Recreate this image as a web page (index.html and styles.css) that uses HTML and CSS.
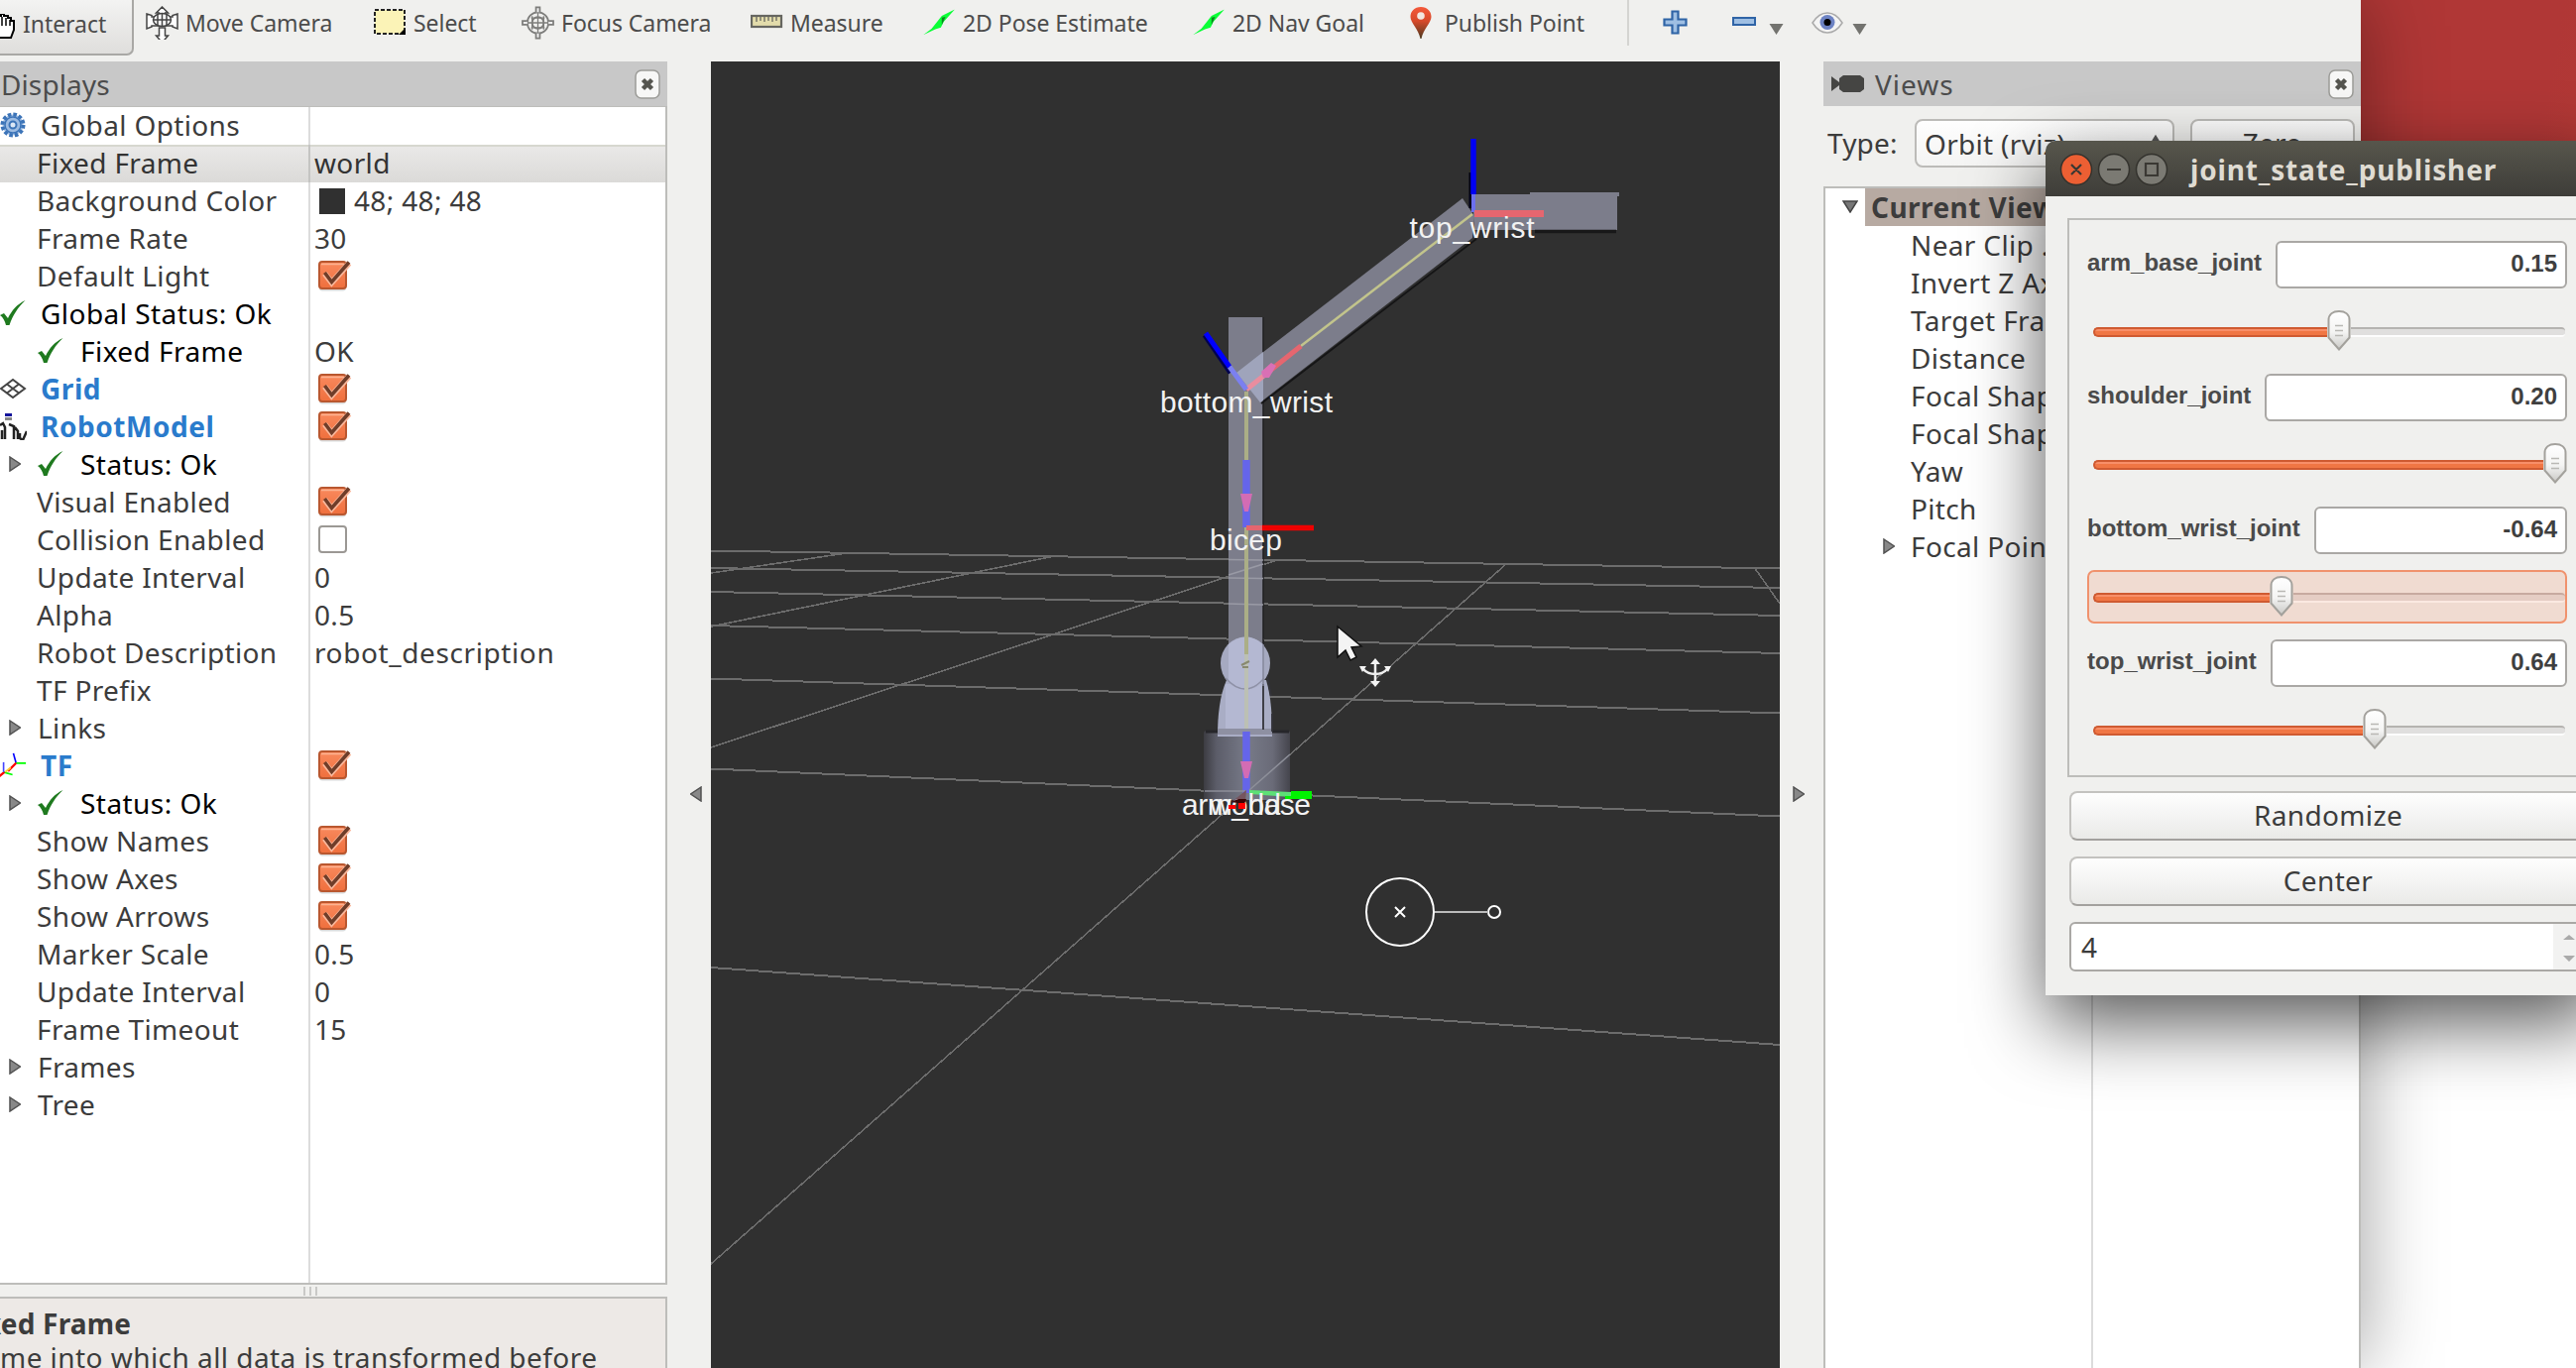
FILE: index.html
```html
<!DOCTYPE html>
<html lang="en">
<head>
<meta charset="utf-8">
<title>RViz</title>
<link rel="stylesheet" href="styles.css">
</head>
<body>
<svg class="defs" width="0" height="0">
  <defs>
    <linearGradient id="g-check" x1="0" y1="0" x2="0" y2="1"><stop offset="0" stop-color="#f98a5e"/><stop offset="1" stop-color="#ef6f3d"/></linearGradient>
    <linearGradient id="g-handle" x1="0" y1="0" x2="0" y2="1"><stop offset="0" stop-color="#fff"/><stop offset=".55" stop-color="#f4f4f3"/><stop offset="1" stop-color="#c9c8c5"/></linearGradient>
    <linearGradient id="g-pin" x1="0" y1="0" x2="0" y2="1"><stop offset="0" stop-color="#f4593a"/><stop offset=".45" stop-color="#d6492a"/><stop offset="1" stop-color="#4a3a20"/></linearGradient>
    <linearGradient id="g-base" x1="0" y1="0" x2="1" y2="0"><stop offset="0" stop-color="#3c3c42"/><stop offset=".15" stop-color="#5c5d69"/><stop offset=".5" stop-color="#777a88"/><stop offset=".8" stop-color="#6a6b78"/><stop offset="1" stop-color="#45454d"/></linearGradient>
    <symbol id="check" viewBox="0 0 34 32"><rect x="1" y="1.5" width="27" height="27" rx="3" fill="#000" opacity=".15" transform="translate(0 2)"/><rect x="1" y="1" width="27" height="27" rx="3" fill="url(#g-check)" stroke="#b9572f" stroke-width="2"/><path d="M3 3.5h23" stroke="#fcb392" stroke-width="1.5"/><path d="M6.500 13l7 9L31 2.500" fill="none" stroke="#f9b79b" stroke-width="6"/><path d="M6.500 12l7 9.500L31 1.500" fill="none" stroke="#6f3d29" stroke-width="3.600"/></symbol>
    <symbol id="tick" viewBox="0 0 26 26"><path d="M0 15l4-2 4 5C12 10 17 4 25.500 0 18 7 13 15 9.500 25H6C5 21 3 17 0 15z" fill="#1f7a1f"/></symbol>
    <symbol id="tri" viewBox="0 0 12 16"><path d="M1 1l10.500 7L1 15z" fill="#888" stroke="#505050" stroke-width="1.500"/></symbol>
    <symbol id="closebox" viewBox="0 0 26 30"><rect x="1" y="1" width="24" height="28" rx="6" fill="#f7f7f6" stroke="#9c9c98" stroke-width="1.500"/><path d="M8.500 10.500l9 9m0-9l-9 9" stroke="#55554f" stroke-width="4.500"/></symbol>
    <symbol id="handle" viewBox="0 0 24 41"><path d="M1.500 10C1.500 4 6 1 12 1s10.500 3 10.500 9v17.500L12 39.500 1.500 27.500z" fill="url(#g-handle)" stroke="#a3a19c" stroke-width="2"/><path d="M8 15.500h8M8 20.500h8M8 25.500h8" stroke="#b9b8b4" stroke-width="1.500"/></symbol>
    <symbol id="arrow" viewBox="0 0 34 28"><path d="M34 0L20 7l-4 5-7 9-9 6.500 13-6 6-2 3-6z" fill="#0bff37"/><path d="M20 9l4-1-4 9z" fill="#0a8a1f"/></symbol>
    <symbol id="down" viewBox="0 0 14 11"><path d="M0 0h14L7 11z" fill="#73736f"/></symbol>
  </defs>
</svg>

<div class="desktop">
  <div class="paper"></div>
  <main class="rviz">
    <div class="toolbar">
      <button class="tool active"><svg class="hand" viewBox="0 0 16 26"><path d="M-3 2v22h14l3-8V7h-3V4H8V2H4V0H1v2z" fill="#fff" stroke="#000" stroke-width="2"/><path d="M2 3v9M6 4v8M10 6v6" stroke="#000" stroke-width="1.500"/></svg><span>Interact</span></button>
      <button class="tool"><svg class="ic" viewBox="0 0 33 34"><g fill="#fff" stroke="#444" stroke-width="1.500"><path d="M16.500 1l6 6h-3v4h-6V7h-3zM16.500 37l6-7h-3v-8h-6v8h-3zM1 8l5 1.500V11h21V9.500L32 8v15l-5-2v-1H6v1l-5 2z"/><ellipse cx="16.500" cy="14" rx="9" ry="6.500"/><path d="M12 8v12M16.500 7v14M21 8v12M8 14h17" fill="none"/></g></svg><span>Move Camera</span></button>
      <button class="tool"><svg class="ic" viewBox="0 0 33 34"><rect x="1" y="4" width="30" height="24" fill="#fbf3b7" stroke="#222" stroke-width="2" stroke-dasharray="4 2"/><path d="M32 22v7h-7z"/></svg><span>Select</span></button>
      <button class="tool"><svg class="ic" viewBox="0 0 34 34"><g fill="none" stroke="#7d7d7b" stroke-width="1.800"><circle cx="17" cy="17" r="11"/><circle cx="17" cy="17" r="6"/><path d="M17 5v24M5 17h24M11 10v14M23 10v14M10 12h14M10 22h14" stroke-width="1.300"/><path d="M15 6V1h4v5M15 28v5h4v-5M6 15H1v4h5M28 15h5v4h-5" fill="#eee"/></g></svg><span>Focus Camera</span></button>
      <button class="tool"><svg class="ic" viewBox="0 0 33 34"><rect x="1" y="10" width="30" height="11" fill="#e3dcab" stroke="#666660" stroke-width="2.200"/><path d="M6 11v5M10 11v4M14 11v5M18 11v4M22 11v5M26 11v4" stroke="#77756a" stroke-width="1.500"/></svg><span>Measure</span></button>
      <button class="tool"><svg class="ic" viewBox="0 -3 34 34"><use href="#arrow" width="33" height="27"/></svg><span>2D Pose Estimate</span></button>
      <button class="tool"><svg class="ic" viewBox="0 -3 34 34"><use href="#arrow" width="33" height="27"/></svg><span>2D Nav Goal</span></button>
      <button class="tool pin"><svg class="ic" viewBox="0 0 22 34"><path d="M11 1C4.500 1 .5 5.500.5 11c0 6 8 12 10 22h1c2-10 10-16 10-22C21.500 5.500 17.500 1 11 1z" fill="url(#g-pin)"/><circle cx="11" cy="10" r="3.800" fill="#f3e6e0"/></svg><span>Publish Point</span></button>
      <i class="sep"></i>
      <svg class="plus" viewBox="0 0 25 25"><path d="M9.500 1.500h6v8h8v6h-8v8h-6v-8h-8v-6h8z" fill="#9fbfe3" stroke="#2f64a6" stroke-width="2.200"/></svg>
      <div class="pair"><svg class="minus" viewBox="0 0 25 10"><rect x="1" y="1" width="22" height="7" fill="#9fbfe3" stroke="#2f64a6" stroke-width="2"/></svg><svg class="down"><use href="#down"/></svg></div>
      <div class="pair eyes"><svg class="eye" viewBox="0 0 32 22"><path d="M1 11C6 3 11 1 16 1s10 2 15 10c-5 8-10 10-15 10S6 19 1 11z" fill="#f4f4f4" stroke="#aaa" stroke-width="1.500"/><circle cx="16" cy="10.500" r="7.500" fill="#6d83c4"/><circle cx="16" cy="10.500" r="3.500"/></svg><svg class="down"><use href="#down"/></svg></div>
    </div>

    <div class="work">
      <section class="displays">
        <header class="dock"><span>Displays</span><svg class="x"><use href="#closebox"/></svg></header>
        <div class="tree">
          <div class="row root"><svg class="gear" viewBox="0 0 27 27"><circle cx="13" cy="13" r="10.500" fill="#9dbce2" stroke="#3c74b8" stroke-width="4" stroke-dasharray="3.500 2"/><circle cx="13" cy="13" r="8" fill="none" stroke="#3c74b8" stroke-width="1.500"/><circle cx="13" cy="13" r="3.500" fill="#dce8f6" stroke="#3c74b8" stroke-width="2"/></svg><b class="name">Global Options</b><span></span></div>
          <div class="row sel"><b class="name">Fixed Frame</b><span>world</span></div>
          <div class="row"><b class="name">Background Color</b><span><i class="swatch"></i>48; 48; 48</span></div>
          <div class="row"><b class="name">Frame Rate</b><span>30</span></div>
          <div class="row"><b class="name">Default Light</b><span><svg class="cb"><use href="#check"/></svg></span></div>
          <div class="row root ok"><svg class="tick"><use href="#tick"/></svg><b class="name">Global Status: Ok</b><span></span></div>
          <div class="row status ok"><svg class="tick"><use href="#tick"/></svg><b class="name">Fixed Frame</b><span>OK</span></div>
          <div class="row root disp"><svg class="gear" viewBox="0 0 27 27"><path d="M1 13L13 4l12 9-12 9zM7 8.500l12 9M19 8.500l-12 9" fill="none" stroke="#444" stroke-width="2"/></svg><b class="name">Grid</b><span><svg class="cb"><use href="#check"/></svg></span></div>
          <div class="row root disp"><svg class="gear" viewBox="0 0 27 27"><path d="M5 0h7v3H5z" fill="#14149a"/><path d="M5 4h7v3H5z" fill="#888"/><path d="M0 12l3-2 2 4v12M9 11l5 2v13M15 14l3 4v8M20 20v5l3 2 4-9M2 17v9" fill="none" stroke="#222" stroke-width="2.500"/></svg><b class="name">RobotModel</b><span><svg class="cb"><use href="#check"/></svg></span></div>
          <div class="row status ok"><svg class="tri"><use href="#tri"/></svg><svg class="tick"><use href="#tick"/></svg><b class="name">Status: Ok</b><span></span></div>
          <div class="row"><b class="name">Visual Enabled</b><span><svg class="cb"><use href="#check"/></svg></span></div>
          <div class="row"><b class="name">Collision Enabled</b><span><i class="empty"></i></span></div>
          <div class="row"><b class="name">Update Interval</b><span>0</span></div>
          <div class="row"><b class="name">Alpha</b><span>0.5</span></div>
          <div class="row"><b class="name">Robot Description</b><span class="wide">robot_description</span></div>
          <div class="row"><b class="name">TF Prefix</b><span></span></div>
          <div class="row"><svg class="tri"><use href="#tri"/></svg><b class="name">Links</b><span></span></div>
          <div class="row root disp"><svg class="gear tf" viewBox="0 0 30 28"><path d="M15 0l3 11" stroke="#00f" stroke-width="1.800"/><path d="M18 11h11M4 21l10 3" stroke="#0f0" stroke-width="2"/><path d="M18 11L9 20M5 21l-6 5" stroke="#f00" stroke-width="2.500"/><path d="M12 16l-6 5" stroke="#fc3" stroke-width="2"/><path d="M4 10v11" stroke="#44f" stroke-width="1.800"/></svg><b class="name">TF</b><span><svg class="cb"><use href="#check"/></svg></span></div>
          <div class="row status ok"><svg class="tri"><use href="#tri"/></svg><svg class="tick"><use href="#tick"/></svg><b class="name">Status: Ok</b><span></span></div>
          <div class="row"><b class="name">Show Names</b><span><svg class="cb"><use href="#check"/></svg></span></div>
          <div class="row"><b class="name">Show Axes</b><span><svg class="cb"><use href="#check"/></svg></span></div>
          <div class="row"><b class="name">Show Arrows</b><span><svg class="cb"><use href="#check"/></svg></span></div>
          <div class="row"><b class="name">Marker Scale</b><span>0.5</span></div>
          <div class="row"><b class="name">Update Interval</b><span>0</span></div>
          <div class="row"><b class="name">Frame Timeout</b><span>15</span></div>
          <div class="row"><svg class="tri"><use href="#tri"/></svg><b class="name">Frames</b><span></span></div>
          <div class="row"><svg class="tri"><use href="#tri"/></svg><b class="name">Tree</b><span></span></div>
          <div class="row fill"><b class="name"></b><span></span></div>
        </div>
        <div class="grip"><i></i><i></i><i></i></div>
        <div class="help"><strong>xed Frame</strong><p>me into which all data is transformed before</p></div>
      </section>

      <div class="gutter"><svg class="collapse flip"><use href="#tri"/></svg></div>

      <svg class="scene" viewBox="717 62 1078 1318" width="1078" height="1318">
        <g stroke="#6c6c6c" stroke-width="2" fill="none" shape-rendering="crispEdges">
          <path d="M717 555.500L1795 573.500M717 573L1795 593M717 597L1795 621M717 631L1795 659M717 684.500L1795 719.500M717 775.500L1795 823.500M717 976L1795 1054"/>
          <path d="M717 578L854 558M717 632L1063 561M717 754L1287 565.500M717 1275L1257 800L1519 569M1769 572L1795 609" stroke-width="1.600"/>
        </g>
        <rect x="1214" y="737" width="87" height="70" rx="3" fill="url(#g-base)"/>
        <path d="M1216 738h84" stroke="#26262a" stroke-width="3"/>
        <path d="M1239 320h35v370h-35z" fill="#7c7d8b"/>
        <path d="M1274 320v370" stroke="#1f1f20" stroke-width="1.500"/>
        <path d="M1239 564.500l35 .5M1239 583l35 .5M1239 609l35 1M1239 580l35-11" stroke="#999aa5" stroke-width="1.500"/>
        <path d="M1237 686C1230 702 1228 722 1228 743h55c0-22-1-40-6-57z" fill="#a9adc5"/>
        <path d="M1236 690v50h38v-50z" fill="#b4b8d2"/>
        <path d="M1228 738h55" stroke="#8e90a2" stroke-width="6"/>
        <path d="M1274 690v46M1283 720v18M1278 682l4 20" stroke="#333339" stroke-width="1.800"/>
        <ellipse cx="1256" cy="669" rx="25" ry="26.500" fill="#a6aac1"/>
        <path d="M1239 650q17-15 35 0v38q-17 14-35 0z" fill="#b4b8d2"/>
        <path d="M1236 684q20 22 39 0" fill="none" stroke="#8e91a6" stroke-width="1.500"/>
        <path d="M1274 650v42" stroke="#85879a" stroke-width="1.500"/>
        <path d="M1475 200L1247 376l24 30L1485 240l2-22z" fill="#7c7d8b"/>
        <path d="M1272 407L1489 241" stroke="#151516" stroke-width="1.800"/>
        <path d="M1247 376l27-21v49l-3 2z" fill="#9fa4bb"/>
        <path d="M1483 174v36" stroke="#000018" stroke-width="3"/>
        <path d="M1486 140v56" stroke="#0000f4" stroke-width="5.500"/>
        <path d="M1485 196h58v-2h90v4h-2v34h-144z" fill="#7c7d8b"/>
        <path d="M1548 233.500h82" stroke="#181819" stroke-width="3.500"/>
        <path d="M1486 196v18" stroke="#6c70ee" stroke-width="4"/>
        <path d="M1487 215.500h70" stroke="#e5666f" stroke-width="7"/>
        <path d="M1485 216L1312 349" stroke="#c2c48c" stroke-width="2.500"/>
        <path d="M1312 349l-30 24" stroke="#e5666f" stroke-width="5"/>
        <path d="M1282 373l-25 20" stroke="#e98d9f" stroke-width="5"/>
        <path d="M1287 369l-5-3-10 9 2 6 6 0z" fill="#d970b5"/>
        <path d="M1215 338l26 38" stroke="#000050" stroke-width="5"/>
        <path d="M1216 336l24 34" stroke="#00f" stroke-width="5"/>
        <path d="M1240 370l17 23" stroke="#7b80f0" stroke-width="5"/>
        <path d="M1257 395v338" stroke="#abae86" stroke-width="4"/>
        <path d="M1257 660v75" stroke="#bcc0b4" stroke-width="4"/>
        <path d="M1252 671l8-4M1253 673h6" stroke="#88896f" stroke-width="2"/>
        <path d="M1257 464v68M1257 738v62" stroke="#6565ea" stroke-width="7.500"/>
        <path d="M1251 498h12l-4 18h-4zM1251 768h12l-4 17h-4z" fill="#d36cb4"/>
        <path d="M1257 532.500h17" stroke="#e5666f" stroke-width="5"/>
        <path d="M1273 532.500h52" stroke="#ee0000" stroke-width="5.500"/>
        <path d="M1215 798h42M1260 797l41-36" stroke="#8d8f99" stroke-width="1.500"/>
        <path d="M1260 797l42 2v5l-42-3z" fill="#5de076"/>
        <path d="M1302 798h21v8h-27v-3h6z" fill="#00f400"/>
        <path d="M1257 797l-15 12h14z" fill="#75555f"/>
        <g class="label">
          <text x="1421.500" y="240" textLength="126">top_wrist</text>
          <text x="1170" y="416" textLength="174">bottom_wrist</text>
          <text x="1220" y="555" textLength="73">bicep</text>
          <text x="1192" y="822" textLength="130">arm_base</text>
          <text x="1220" y="822" textLength="72">world</text>
        </g>
        <path d="M1241 809l8-3h8l-2 5z" fill="#3a0505"/>
        <path d="M1239 812h7v4h-7zM1249 810h7v6h-7z" fill="#f00"/>
        <path d="M1349 632v31l8-7 5 10 6-3-5-10 10-1z" fill="#f4f4f4" stroke="#111" stroke-width="1.500"/>
        <path d="M1387 668v21M1374 674q5 6 13 6t13-6" fill="none" stroke="#eee" stroke-width="2.500"/>
        <path d="M1387 664l5 6h-10zM1387 693l5-6h-10zM1371 672l7 0-4 6zM1403 672l-7 0 4 6z" fill="#f4f4f4"/>
        <g fill="none" stroke="#fff" stroke-width="2"><circle cx="1412" cy="920" r="34"/><path d="M1407 915l10 10m0-10l-10 10"/><circle cx="1507" cy="920" r="6"/><path d="M1447 920h54" stroke="#bbb"/></g>
      </svg>

      <div class="gutter right"><svg class="collapse"><use href="#tri"/></svg></div>

      <section class="views">
        <header class="dock"><svg class="cam" viewBox="0 0 33 18"><path d="M0 1l8 6V3l4-3h17l4 3v11l-4 3H12l-4-3v-4l-8 6z" fill="#454543"/></svg><span>Views</span><svg class="x"><use href="#closebox"/></svg></header>
        <div class="type"><label>Type:</label><div class="combo"><span>Orbit (rviz)</span><svg viewBox="0 0 12 22"><path d="M6 0l5 8H1zM6 22l5-8H1z" fill="#555"/></svg></div><div class="zero">Zero</div></div>
        <div class="vtree">
          <div class="vhead"><svg viewBox="0 0 16 13"><path d="M1 1h14L8 12z" fill="#777" stroke="#444" stroke-width="1.500"/></svg><strong>Current View</strong></div>
          <div class="vrow">Near Clip ...</div>
          <div class="vrow">Invert Z Axis</div>
          <div class="vrow">Target Frame</div>
          <div class="vrow">Distance</div>
          <div class="vrow">Focal Shape</div>
          <div class="vrow">Focal Shape</div>
          <div class="vrow">Yaw</div>
          <div class="vrow">Pitch</div>
          <div class="vrow exp"><svg class="tri"><use href="#tri"/></svg>Focal Point</div>
        </div>
      </section>
    </div>
  </main>

  <aside class="joints">
    <header class="title"><svg viewBox="0 0 110 34" width="110" height="34"><g stroke="#33322d" stroke-width="1.500"><circle cx="17" cy="17" r="15.500" fill="#ec5f33"/><circle cx="55" cy="17" r="15.500" fill="#7b7a73"/><circle cx="93" cy="17" r="15.500" fill="#7b7a73"/></g><path d="M12 12l10 10m0-10L12 22M48 17h14M87 11h12v12H87z" fill="none" stroke="#3a3833" stroke-width="2.200"/></svg><span>joint_state_publisher</span></header>
    <div class="frame">
      <div class="joint"><label>arm_base_joint</label><output>0.15</output></div>
      <div class="slider"><i class="fillbar s1"></i><svg class="handle"><use href="#handle"/></svg><i class="rest"></i></div>
      <div class="joint"><label>shoulder_joint</label><output>0.20</output></div>
      <div class="slider"><i class="fillbar s2"></i><svg class="handle"><use href="#handle"/></svg><i class="rest"></i></div>
      <div class="joint"><label>bottom_wrist_joint</label><output>-0.64</output></div>
      <div class="slider focus"><i class="fillbar s3"></i><svg class="handle"><use href="#handle"/></svg><i class="rest"></i></div>
      <div class="joint"><label>top_wrist_joint</label><output>0.64</output></div>
      <div class="slider"><i class="fillbar s4"></i><svg class="handle"><use href="#handle"/></svg><i class="rest"></i></div>
    </div>
    <div class="btn">Randomize</div>
    <div class="btn">Center</div>
    <div class="spin"><span>4</span><svg viewBox="0 0 32 46" width="32" height="46"><path d="M10 16l6-5 6 5zM10 32h12l-6 6z" fill="#aaa"/></svg></div>
  </aside>
</div>
</body>
</html>
```
FILE: styles.css
```css
* { box-sizing: border-box; }
body {
  margin: 0;
  overflow: hidden;
  font-family: "Noto Sans", sans-serif;
  font-size: 28px;
  letter-spacing: .15px;
  color: #3c3c3c;
}
.defs { position: absolute; }
svg { display: block; flex: none; }
i { display: block; }

.desktop {
  position: relative;
  width: 2598px;
  height: 1380px;
  overflow: hidden;
  background: linear-gradient(100deg, #b03736 91%, #b73c32 97%);
}
.paper { position: absolute; left: 2381px; top: 600px; width: 217px; height: 780px; background: #fff; }

.rviz {
  position: relative;
  width: 2381px;
  height: 1380px;
  display: flex;
  flex-direction: column;
  background: #f0f0ee;
  box-shadow: 0 0 75px rgba(0, 0, 0, .38);
}

/* toolbar */
.toolbar {
  height: 62px;
  display: grid;
  grid-template-columns: 147px 230px 149px 231px 174px 272px 219px 219px 36px 70px 80px 100px;
  align-items: start;
}
.tool {
  display: flex;
  align-items: center;
  height: 46px;
  padding: 0;
  border: 0;
  background: none;
  font: 23px/46px "Noto Sans", sans-serif;
  letter-spacing: -.05px;
  color: #4c4c4c;
  white-space: nowrap;
}
.tool .ic { width: 33px; height: 34px; margin-right: 7px; }
.tool.pin .ic { width: 22px; margin-right: 13px; }
.tool.active {
  width: 135px;
  height: 56px;
  padding-bottom: 7px;
  border-right: 2px solid #a9a8a5;
  border-bottom: 2px solid #a9a8a5;
  border-radius: 0 0 7px 0;
  background: linear-gradient(#f3f3f2, #dfdedc);
}
.hand { width: 16px; height: 26px; margin: 6px 7px 0 0; }
.sep { width: 2px; height: 46px; background: #d4d4d1; }
.plus { width: 25px; height: 25px; margin-top: 10px; }
.pair { display: flex; padding-top: 17px; gap: 12px; }
.minus { width: 25px; height: 10px; }
.down { width: 15px; height: 11px; margin-top: 7px; }
.eyes { padding-top: 12px; gap: 9px; }
.eyes .down { margin-top: 12px; }
.eye { width: 32px; height: 22px; }

/* docks */
.work { flex: 1; display: flex; }
.dock {
  height: 45px;
  display: flex;
  align-items: center;
  background: #c8c8c8;
  color: #4c4c4c;
}
.dock .x { width: 26px; height: 30px; margin-left: auto; }
.displays { width: 673px; height: 1318px; display: flex; flex-direction: column; }
.displays .dock { padding: 0 7px 0 1px; letter-spacing: .1px; }

.tree {
  height: 1189px;
  display: flex;
  flex-direction: column;
  border: solid #bdbdba;
  border-width: 1px 2px 2px 0;
  background: #fff;
}
.row {
  height: 38px;
  flex: none;
  display: flex;
  align-items: center;
  line-height: 37px;
  white-space: nowrap;
  padding-left: 37px;
  letter-spacing: .35px;
}
.row .name {
  flex: 1;
  height: 38px;
  font-weight: 400;
}
.row > span {
  width: 360px;
  height: 38px;
  display: flex;
  align-items: center;
  padding: 0 0 1px 4px;
  border-left: 2px solid #dcdcdc;
}
.row > .wide { letter-spacing: .6px; }
.row.root { padding-left: 0; }
.row.root .name { padding-left: 14px; }
.row.ok .name { color: #000; letter-spacing: .45px; }
.row.disp .name { font-weight: 700; color: #2a7bcc; letter-spacing: .55px; }
.row.sel { box-shadow: inset 0 2px #d6d7cf; background: linear-gradient(#eae9e8, #dbdad8); color: #333; }
.row.sel > span { border-color: #c4c4c2; }
.row.fill { flex: 1; align-items: stretch; }
.row.fill > span { height: auto; }
.gear { width: 27px; height: 27px; margin-top: -2px; }
.tick { width: 26px; height: 26px; margin: -2px 1px 0 0; }
.row.status { padding-left: 38px; }
.row.status .name { padding-left: 16px; }
.row .tri { margin: -2px 17px 0 -28px; }
.row.status .tri { margin: -2px 17px 0 -29px; }
.tri { width: 12px; height: 16px; }
.swatch { width: 26px; height: 26px; margin: 0 9px 0 5px; background: #303030; }
.cb { width: 34px; height: 32px; margin: 1px 0 0 4px; }
.empty { width: 29px; height: 28px; margin: -2px 0 0 4px; border: 2px solid #9b9894; border-radius: 4px; }
.grip { height: 12px; display: flex; justify-content: center; gap: 4px; padding: 2px 48px 1px 0; }
.grip i { width: 2px; background: #c9c9c7; }
.help {
  flex: 1;
  border: solid #bdbdba;
  border-width: 2px 2px 0 0;
  background: #ede9e6;
  line-height: 34px;
  padding-top: 8px;
  overflow: hidden;
  white-space: nowrap;
  letter-spacing: .45px;
}
.help strong, .help p { display: block; margin: 0; height: 34px; }
.help strong { line-height: 33px; padding-top: 1px; text-indent: -15px; letter-spacing: .2px; }

.gutter { width: 44px; padding: 731px 0 0 23px; }
.gutter.right { padding-left: 13px; }
.collapse { width: 12px; height: 16px; }
.flip { transform: scaleX(-1); }

/* 3D scene */
.scene { background: #303030; }
.label text {
  font: 30px "Liberation Sans", Arial, sans-serif;
  letter-spacing: 0;
  fill: #f2f2f2;
}

/* views */
.views { width: 542px; height: 1318px; display: flex; flex-direction: column; }
.views .dock { padding: 0 7px 0 8px; letter-spacing: 1px; }
.cam { width: 33px; height: 18px; margin-right: 11px; }
.type { display: flex; height: 80px; padding: 13px 6px 0 4px; line-height: 49px; }
.type label { width: 88px; }
.combo, .zero {
  height: 49px;
  border: 2px solid #bcbbb8;
  border-radius: 8px;
  background: linear-gradient(#fefefe, #f4f4f3);
  line-height: 44px;
}
.combo { width: 262px; display: flex; align-items: center; justify-content: space-between; padding: 0 12px 0 8px; margin-right: 16px; letter-spacing: .3px; }
.combo svg { width: 10px; height: 20px; }
.zero { width: 166px; text-align: center; }
.vtree {
  flex: 1;
  border: 2px solid #bdbdba;
  border-bottom: 0;
  background: linear-gradient(#dcdcdc, #dcdcdc) 268px 0 / 2px 100% no-repeat #fff;
  margin-top: 1px;
  letter-spacing: .35px;
}
.vhead { height: 38px; display: flex; align-items: center; padding-left: 17px; }
.vhead svg { width: 16px; height: 13px; margin-top: -2px; }
.vhead strong { flex: 1; margin-left: 7px; padding-left: 6px; height: 38px; line-height: 38px; background: #b7aaa2; letter-spacing: .45px; }
.vrow { height: 38px; line-height: 38px; padding-left: 86px; }
.vrow.exp { display: flex; align-items: center; padding-left: 58px; }
.exp .tri { margin-right: 16px; }

/* joint_state_publisher window */
.joints {
  position: absolute;
  left: 2063px;
  top: 142px;
  width: 560px;
  height: 862px;
  border-radius: 10px 0 0 0;
  background: #f0f0ee;
  box-shadow: 0 28px 75px rgba(0, 0, 0, .66);
}
.title {
  height: 56px;
  display: flex;
  align-items: center;
  gap: 22px;
  padding: 1px 0 0 14px;
  border-radius: 10px 0 0 0;
  background: linear-gradient(#57564c, #3e3d39);
  font-weight: 700;
  letter-spacing: .85px;
  color: #dfdbd2;
}
.frame {
  width: 540px;
  height: 564px;
  margin: 22px 0 0 22px;
  padding: 20.500px 0 0 18px;
  border: 2px solid #bdbdba;
}
.joint {
  width: 484px;
  height: 48px;
  display: flex;
  align-items: center;
  gap: 14px;
  font: 700 24px "Liberation Sans", Arial, sans-serif;
  letter-spacing: 0;
  color: #4a4a4a;
}
.joint label { padding-bottom: 3px; }
.joint output {
  flex: 1;
  height: 48px;
  padding-right: 8px;
  border: 2px solid #aaa8a5;
  border-radius: 6px;
  background: #fff;
  text-align: right;
  line-height: 41px;
  color: #3f3f3f;
}
.slider {
  width: 484px;
  height: 54px;
  margin: 16px 0;
  padding: 0 0 0 4px;
  display: flex;
  align-items: center;
  border: 2px solid transparent;
  border-radius: 7px;
}
.slider.focus { border-color: #f0926d; background: #f0dbd1; }
.fillbar {
  flex: none;
  height: 10px;
  margin-top: 2px;
  border: 2px solid #cf5a31;
  border-right: 0;
  border-radius: 5px 0 0 5px;
  background: linear-gradient(#f88f69 40%, #f07644 40%);
}
.s1 { width: 236px; }
.s2 { width: 454px; }
.s3 { width: 178px; }
.s4 { width: 272px; }
.handle { width: 24px; height: 41px; }
.rest {
  flex: 1;
  height: 10px;
  margin-top: 2px;
  border-top: 2px solid #b5b3b0;
  border-bottom: 2px solid #fdfdfd;
  border-radius: 0 4px 4px 0;
  background: #e0dfde;
}
.focus .rest { border-color: #c7aaa0 transparent #fbe9e1; background: #e5cdc4; }
.btn {
  width: 522px;
  height: 50px;
  margin: 14px 0 0 24px;
  border: 2px solid #c3c2bf;
  border-bottom-color: #a3a19e;
  border-radius: 8px;
  background: linear-gradient(#fefefe, #eaeae8);
  text-align: center;
  line-height: 45px;
  letter-spacing: .35px;
}
.btn + .btn { margin-top: 16px; }
.spin {
  width: 522px;
  height: 50px;
  margin: 16px 0 0 24px;
  display: flex;
  border: 2px solid #aaa8a5;
  border-radius: 6px;
  background: #fff;
  line-height: 46px;
}
.spin span { width: 489px; padding-left: 10px; border-right: 2px solid #c9c7c4; }
.spin svg { background: #f2f2f1; margin-left: -2px; }
```
